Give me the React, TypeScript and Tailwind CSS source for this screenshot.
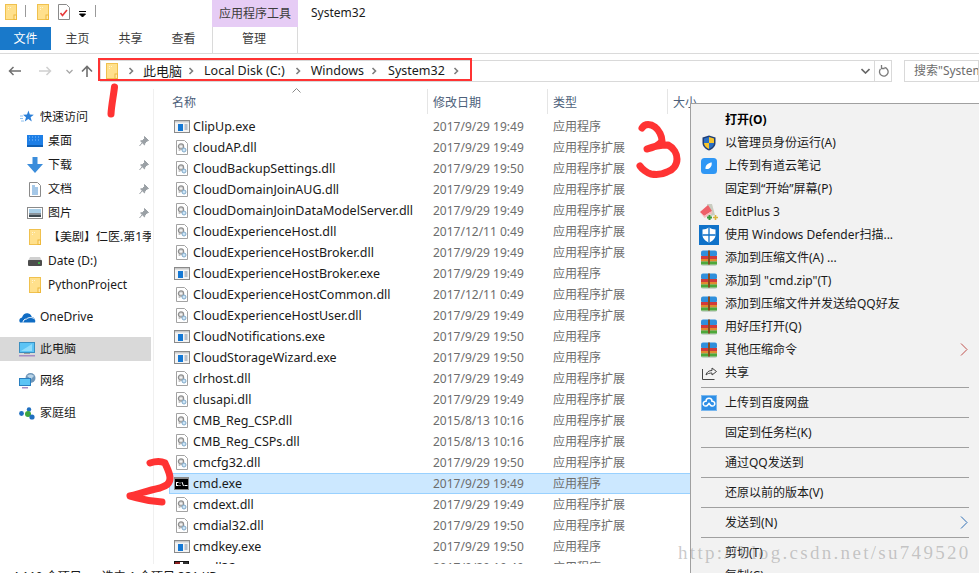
import React from "react";

const FONT = "font-['Noto_Sans','Noto_Sans_CJK_SC',sans-serif]";

function Folder({ w = 12, h = 16 }: { w?: number; h?: number }) {
  return (
    <svg width={w} height={h} viewBox="0 0 12 16" className="shrink-0">
      <rect x="0.5" y="0.5" width="11" height="15" fill="#ffe08c" stroke="#f0c14e" />
      <rect x="9" y="11" width="2.5" height="4.5" fill="#ffe9ad" stroke="#eeb83a" strokeWidth="1" />
      <rect x="3" y="3" width="1" height="1" fill="#fff4cf" />
      <rect x="5" y="3" width="1" height="1" fill="#fff4cf" />
      <rect x="3" y="5" width="1" height="1" fill="#fff4cf" />
    </svg>
  );
}

function ExeIcon() {
  return (
    <svg width="16" height="13" viewBox="0 0 16 13" className="shrink-0">
      <rect x="0.5" y="0.5" width="15" height="12" fill="#f4f4f4" stroke="#8a8a8a" />
      <rect x="1" y="1" width="14" height="1.5" fill="#c9c9c9" />
      <rect x="4" y="4" width="5" height="7" fill="#1578d4" />
      <path d="M10.5 5h3M10.5 7h3M10.5 9h3" stroke="#7a8aa0" strokeWidth="1" />
    </svg>
  );
}

function DllIcon() {
  return (
    <svg width="12" height="15" viewBox="0 0 12 15" className="shrink-0">
      <path d="M.5.5h8l3 3v11H.5z" fill="#fff" stroke="#a3a3a3" />
      <circle cx="5" cy="6.5" r="2.6" fill="#d8d8d8" stroke="#8f8f8f" strokeWidth="1.2" />
      <circle cx="5" cy="6.5" r="0.8" fill="#fff" />
      <circle cx="8" cy="10" r="2" fill="#cfe6f7" stroke="#80a9c9" strokeWidth="1" />
      <circle cx="3.5" cy="10" r="1.1" fill="#bcbcbc" />
    </svg>
  );
}

function CmdIcon() {
  return (
    <svg width="15" height="13" viewBox="0 0 15 13" className="shrink-0">
      <rect x="0" y="0" width="15" height="13" fill="#8a8a8a" />
      <rect x="1" y="2" width="13" height="10" fill="#000" />
      <path d="M2 5h2.500v1H3v2h1.500v1H2zM5.500 5.500h1v1h-1zM5.500 8h1v1h-1zM7.500 5h1l1.500 4H9zM10.500 8h3v1h-3z" fill="#fff" />
    </svg>
  );
}

function Cmdl32Icon() {
  return (
    <svg width="15" height="13" viewBox="0 0 15 13" className="shrink-0">
      <rect x="0.5" y="0.5" width="14" height="12" fill="#fff" stroke="#111" />
      <rect x="1" y="1" width="5" height="4" fill="#8a1f1f" />
      <rect x="9" y="1" width="5" height="4" fill="#333" />
    </svg>
  );
}

function Chevron({ className = "" }: { className?: string }) {
  return (
    <svg width="6" height="8" viewBox="0 0 6 8" className={`shrink-0 ${className}`}>
      <path d="M1.5 1l3 3-3 3" fill="none" stroke="#7c7c7c" strokeWidth="1.6" />
    </svg>
  );
}

function Pin() {
  return (
    <svg width="10" height="11" viewBox="0 0 10 11" className="shrink-0">
      <path d="M5.5.5l4 4-1.6.6-2 2-.4 1.8L1.6 5l1.9-.4 2-2.1zM3 7l-2.5 3" fill="#9aa0a5" stroke="#9aa0a5" strokeWidth="1" />
    </svg>
  );
}

function Shield() {
  return (
    <svg width="14" height="16" viewBox="0 0 14 16">
      <path d="M7 .5L13.5 2.5V8c0 3.5-3 6-6.5 7.5C3.5 14 .5 11.500.5 8V2.500z" fill="#1f3f78" />
      <path d="M7 2l5 1.500V8H7zM7 8v6C4.500 13 2 11 2 8z" fill="#f7c52c" />
      <path d="M7 2L2 3.500V8h5zM7 8v6c2.500-1 5-3 5-6z" fill="#2a6fc4" />
    </svg>
  );
}

function Youdao() {
  return (
    <svg width="16" height="16" viewBox="0 0 16 16">
      <rect width="16" height="16" rx="3.500" fill="#2f97f5" />
      <path d="M4.500 11c-.3-2.500.8-4.500 3-5.500l3-1.300c.8 2-.2 4.500-1.600 5.700-1.300 1-2.800 1.300-4.400 1.100z" fill="#fff" />
    </svg>
  );
}

function EditPlus() {
  return (
    <svg width="20" height="18" viewBox="0 0 20 18">
      <path d="M8 1l5 0 3 11-4 1z" fill="#c9ccc0" />
      <path d="M1 9L9 2l4 6-8 5z" fill="#ee6068" />
      <path d="M1 9l4 4 8-5 .5 2-8 5z" fill="#f6bcbe" />
      <path d="M8 14.500h5M10.500 12v5" stroke="#3c9a3c" strokeWidth="2" />
      <path d="M14 14.500h5M16.500 12v5" stroke="#d9b23c" strokeWidth="1.600" />
    </svg>
  );
}

function Defender() {
  return (
    <svg width="20" height="20" viewBox="0 0 20 20">
      <rect width="20" height="20" fill="#0f72c9" />
      <path d="M10 2.500c2 1.300 4 2 6.500 2V10c0 3.500-3 6-6.500 7.500C6.500 16 3.500 13.500 3.500 10V4.500c2.500 0 4.500-.7 6.500-2z" fill="#fff" />
      <path d="M10 2.500v15M3.500 10h13" stroke="#0f72c9" strokeWidth="1.300" />
    </svg>
  );
}

function Rar() {
  return (
    <svg width="16" height="16" viewBox="0 0 16 16">
      <rect x="0" y="1" width="16" height="15" rx="2" fill="#c8d4c8" />
      <rect x="0" y="0.500" width="16" height="6" rx="2" fill="#2f8fdc" />
      <rect x="0" y="6" width="16" height="3" fill="#d23a3a" />
      <rect x="0" y="9" width="16" height="2.500" fill="#e08a2e" />
      <rect x="0" y="11.500" width="16" height="3" fill="#4da83a" />
      <rect x="7" y="0.500" width="2" height="14" fill="#8a4b1e" />
    </svg>
  );
}

function Share() {
  return (
    <svg width="15" height="15" viewBox="0 0 15 15" fill="none" stroke="#444" strokeWidth="1">
      <path d="M.5 4v10.500h12" />
      <path d="M4 10c.5-3 3-4.500 6-4.500V3l4.500 3.500L10 10V8c-2.500 0-4.500.5-6 2z" />
    </svg>
  );
}

function Baidu() {
  return (
    <svg width="16" height="16" viewBox="0 0 16 16">
      <rect width="16" height="16" fill="#2f8fe6" />
      <rect x="0.500" y="0.500" width="15" height="15" fill="none" stroke="#79b7ee" />
      <path d="M3 10.500a2.500 2.500 0 0 1 2-4.300 3 3 0 0 1 6 0 2.500 2.500 0 0 1 2 4.300 2.500 2.500 0 0 1-3.700-.5L8 8.500 6.700 10A2.500 2.500 0 0 1 3 10.500z" fill="none" stroke="#fff" strokeWidth="1.500" />
    </svg>
  );
}

type Row = { name: string; date: string; kind: "exe" | "dll" | "cmd" | "cm32"; selected?: boolean };

const rows: Row[] = [
  { name: "ClipUp.exe", date: "2017/9/29 19:49", kind: "exe" },
  { name: "cloudAP.dll", date: "2017/9/29 19:49", kind: "dll" },
  { name: "CloudBackupSettings.dll", date: "2017/9/29 19:50", kind: "dll" },
  { name: "CloudDomainJoinAUG.dll", date: "2017/9/29 19:49", kind: "dll" },
  { name: "CloudDomainJoinDataModelServer.dll", date: "2017/9/29 19:49", kind: "dll" },
  { name: "CloudExperienceHost.dll", date: "2017/12/11 0:49", kind: "dll" },
  { name: "CloudExperienceHostBroker.dll", date: "2017/9/29 19:49", kind: "dll" },
  { name: "CloudExperienceHostBroker.exe", date: "2017/9/29 19:49", kind: "exe" },
  { name: "CloudExperienceHostCommon.dll", date: "2017/12/11 0:49", kind: "dll" },
  { name: "CloudExperienceHostUser.dll", date: "2017/9/29 19:49", kind: "dll" },
  { name: "CloudNotifications.exe", date: "2017/9/29 19:50", kind: "exe" },
  { name: "CloudStorageWizard.exe", date: "2017/9/29 19:50", kind: "exe" },
  { name: "clrhost.dll", date: "2017/9/29 19:49", kind: "dll" },
  { name: "clusapi.dll", date: "2017/9/29 19:49", kind: "dll" },
  { name: "CMB_Reg_CSP.dll", date: "2015/8/13 10:16", kind: "dll" },
  { name: "CMB_Reg_CSPs.dll", date: "2015/8/13 10:16", kind: "dll" },
  { name: "cmcfg32.dll", date: "2017/9/29 19:50", kind: "dll" },
  { name: "cmd.exe", date: "2017/9/29 19:49", kind: "cmd", selected: true },
  { name: "cmdext.dll", date: "2017/9/29 19:49", kind: "dll" },
  { name: "cmdial32.dll", date: "2017/9/29 19:50", kind: "dll" },
  { name: "cmdkey.exe", date: "2017/9/29 19:50", kind: "exe" },
  { name: "cmdl32.exe", date: "2017/9/29 19:49", kind: "cm32" },
];

function FileRow({ r }: { r: Row }) {
  const isApp = r.kind !== "dll";
  return (
    <div
      className={`flex h-[21px] shrink-0 items-center border ${
        r.selected ? "border-[#99d1ff] bg-[#cce8ff]" : "border-transparent"
      }`}
    >
      <div className="flex w-[23px] shrink-0 justify-center">
        {r.kind === "exe" && <ExeIcon />}
        {r.kind === "dll" && <DllIcon />}
        {r.kind === "cmd" && <CmdIcon />}
        {r.kind === "cm32" && <Cmdl32Icon />}
      </div>
      <span className="w-[240px] shrink-0 truncate pt-[2px] text-[12.5px] text-[#1a1a1a]">{r.name}</span>
      <span className="w-[120px] shrink-0 text-[#6d6d6d]">{r.date}</span>
      <span className="shrink-0 text-[#6d6d6d]">{isApp ? "应用程序" : "应用程序扩展"}</span>
    </div>
  );
}

function NavItem({
  icon,
  label,
  pin,
  indent,
  className = "",
}: {
  icon: React.ReactNode;
  label: string;
  pin?: boolean;
  indent?: boolean;
  className?: string;
}) {
  return (
    <div className={`mr-[2px] flex h-6 items-center whitespace-nowrap text-[#1a1a1a] ${className}`}>
      <div className={`flex shrink-0 justify-center ${indent ? "w-[48px] pl-[22px]" : "w-[40px] pl-[14px]"}`}>{icon}</div>
      <span className="flex-1 overflow-hidden">{label}</span>
      {pin && (
        <div className="mr-[2px]">
          <Pin />
        </div>
      )}
    </div>
  );
}

function Star() {
  return (
    <svg width="14" height="14" viewBox="0 0 14 14">
      <path d="M8.500.500l1.300 4 4 .3-3.200 2.500 1.200 4.200-3.500-2.400-3.500 2.400 1.200-4.200L3 4.800l4-.3z" fill="#2a7fd8" />
      <path d="M0 6h3M0 8.500h3M1 11h3" stroke="#8ec0ee" strokeWidth="1" />
    </svg>
  );
}

const Desktop = () => (
  <svg width="16" height="12" viewBox="0 0 16 12">
    <rect x="0" y="0" width="16" height="12" fill="#1e7fe6" />
    <rect x="0" y="10" width="16" height="2" fill="#0f5fb4" />
    <path d="M2 2h1M5 2h1M8 2h1M11 2h1M2 5h1M5 5h1M8 5h1M11 5h1" stroke="#7fc0ff" />
  </svg>
);
const Download = () => (
  <svg width="16" height="16" viewBox="0 0 16 16">
    <path d="M5.500 0h5v7H16l-8 9-8-9h5.500z" fill="#3b8ddb" />
  </svg>
);
const Doc = () => (
  <svg width="12" height="15" viewBox="0 0 12 15">
    <path d="M.5.500h8l3 3v11H.5z" fill="#fff" stroke="#8a8a8a" />
    <path d="M3 4h3M3 6h6M3 8h6M3 10h6M3 12h6" stroke="#4a90d0" />
  </svg>
);
const Pic = () => (
  <svg width="16" height="12" viewBox="0 0 16 12">
    <rect x="0.500" y="0.500" width="15" height="11" fill="#fff" stroke="#8a8a8a" />
    <rect x="2" y="2" width="12" height="4" fill="#a9cfe8" />
    <rect x="2" y="6" width="12" height="2" fill="#8a949c" />
    <rect x="2" y="8" width="12" height="2" fill="#3e4a52" />
  </svg>
);
const Drive = () => (
  <svg width="14" height="9" viewBox="0 0 14 9">
    <path d="M2 0h10l2 4H0z" fill="#d0d0d0" />
    <rect x="0" y="3" width="14" height="6" rx="1" fill="#4d4d4d" />
    <rect x="10" y="5" width="2" height="2" fill="#3fae49" />
  </svg>
);
const Cloud = () => (
  <svg width="17" height="11" viewBox="0 0 17 11">
    <path d="M1 10.500c-1.500-2-.5-4.500 2-5C4 2 7 .5 9.500 1.500c2 .5 3 2 3.300 3.500 2.500 0 4.200 3 3.200 5.500z" fill="#0f6cc4" />
    <path d="M4 10.500c0-2 1.500-3.500 3.500-3.500 2-2 6-2 8 0" fill="none" stroke="#fff" strokeWidth="1" />
  </svg>
);
const Pc = () => (
  <svg width="16" height="15" viewBox="0 0 16 15">
    <rect x="0.500" y="0.500" width="15" height="10" fill="#5cc4f5" stroke="#3a8fc0" />
    <path d="M2 9l11-7v7z" fill="#8fdcfb" />
    <rect x="5" y="11" width="6" height="1" fill="#9a9a9a" />
    <rect x="0" y="13" width="16" height="1.500" fill="#a78cc4" />
  </svg>
);
const Net = () => (
  <svg width="17" height="16" viewBox="0 0 17 16">
    <circle cx="11.500" cy="5" r="5" fill="#6f96b8" />
    <path d="M8 3c2-2 5-2 7 0l-3 3z" fill="#b9d4e8" />
    <rect x="0.500" y="5.500" width="11" height="7" fill="#5cc4f5" stroke="#2a7fc0" />
    <rect x="3" y="14" width="6" height="1.500" fill="#a78cc4" />
  </svg>
);
const Home = () => (
  <svg width="16" height="13" viewBox="0 0 16 13">
    <circle cx="2.500" cy="6.500" r="2.400" fill="#1f6fc0" />
    <circle cx="10" cy="2.500" r="2.200" fill="#1f6fc0" />
    <circle cx="9" cy="7" r="3" fill="#3fa63f" />
    <circle cx="13" cy="10" r="2.600" fill="#1f6fc0" />
  </svg>
);

function MenuItem({
  icon,
  label,
  bold,
  arrow,
}: {
  icon?: React.ReactNode;
  label: string;
  bold?: boolean;
  arrow?: string;
}) {
  return (
    <div className="flex h-[23px] shrink-0 items-center whitespace-nowrap">
      <div className="flex w-[34px] shrink-0 justify-center pl-[2px]">{icon}</div>
      <span className={bold ? "font-bold text-black" : "text-[#1a1a1a]"}>{label}</span>
      {arrow && (
        <svg width="8" height="13" viewBox="0 0 8 13" className="ml-auto mr-[11px]">
          <path d="M1 .5l6 6-6 6" fill="none" stroke={arrow} strokeWidth="1" />
        </svg>
      )}
    </div>
  );
}

const MenuSep = () => (
  <div className="flex h-[7px] shrink-0 items-center pl-[10px] pr-[10px]">
    <div className="h-px w-full bg-[#a0a0a0]" />
  </div>
);

function ContextMenu() {
  return (
    <div className="absolute left-[690px] top-[103px] flex h-[480px] w-[290px] flex-col border border-[#a0a0a0] bg-[#f2f2f2] pt-[4px] text-[12px]">
      <MenuItem bold label="打开(O)" />
      <MenuItem icon={<Shield />} label="以管理员身份运行(A)" />
      <MenuItem icon={<Youdao />} label="上传到有道云笔记" />
      <MenuItem label="固定到“开始”屏幕(P)" />
      <MenuItem icon={<EditPlus />} label="EditPlus 3" />
      <MenuItem icon={<Defender />} label="使用 Windows Defender扫描..." />
      <MenuItem icon={<Rar />} label="添加到压缩文件(A) ..." />
      <MenuItem icon={<Rar />} label="添加到 &quot;cmd.zip&quot;(T)" />
      <MenuItem icon={<Rar />} label="添加到压缩文件并发送给QQ好友" />
      <MenuItem icon={<Rar />} label="用好压打开(Q)" />
      <MenuItem icon={<Rar />} label="其他压缩命令" arrow="#c0504d" />
      <MenuItem icon={<Share />} label="共享" />
      <MenuSep />
      <MenuItem icon={<Baidu />} label="上传到百度网盘" />
      <MenuSep />
      <MenuItem label="固定到任务栏(K)" />
      <MenuSep />
      <MenuItem label="通过QQ发送到" />
      <MenuSep />
      <MenuItem label="还原以前的版本(V)" />
      <MenuSep />
      <MenuItem label="发送到(N)" arrow="#2f6fb5" />
      <MenuSep />
      <MenuItem label="剪切(T)" />
      <MenuItem label="复制(C)" />
    </div>
  );
}

function Scribbles() {
  return (
    <svg
      width="979"
      height="573"
      viewBox="0 0 979 573"
      className="pointer-events-none absolute left-0 top-0"
      fill="none"
      stroke="#ff3333"
      strokeLinecap="round"
      strokeLinejoin="round"
    >
      <path d="M114.500 87c-1 9-3 18-3.500 27" strokeWidth="7" />
      <path d="M150 463c6-2 11-2 15 0 2 5 5 10 5 15 0 6-4 8-10 10-9 2-19 5-30 8 9 2 15 5 32 6" strokeWidth="7" />
      <path d="M642 128c3-5 9-4 13-1 4 3 7 9 7 14-3 4-9 7-15 8 7-3 14-4 21-4 6 3 9 9 9 14 0 6-4 11-10 13-6 3-11 3-16 2-4-1-9-5-11-8" strokeWidth="7" />
    </svg>
  );
}

export default function App() {
  return (
    <div className={`relative flex h-[573px] w-[979px] flex-col overflow-hidden bg-white text-[12px] leading-none ${FONT}`}>
      {/* title row */}
      <div className="flex h-[27px] shrink-0 items-start">
        <div className="flex h-[27px] w-[212px] items-start pl-[5px] pt-[4px]">
          <Folder />
          <div className="ml-[8px] mt-[1px] h-[12px] w-px bg-[#9a9a9a]" />
          <div className="ml-[11px]">
            <Folder />
          </div>
          <svg width="12" height="16" viewBox="0 0 12 16" className="ml-[9px]">
            <path d="M.5.500h8l3 3v12H.5z" fill="#fff" stroke="#8a8a8a" />
            <path d="M2.500 9l2 2.500L9 6" fill="none" stroke="#e63a3a" strokeWidth="1.600" />
          </svg>
          <svg width="7" height="6" viewBox="0 0 7 6" className="ml-[9px] mt-[7px]">
            <path d="M0 .5h7M.5 3h6L3.500 6z" stroke="#000" strokeWidth="1" fill="#000" />
          </svg>
          <div className="ml-[9px] mt-[1px] h-[12px] w-px bg-[#9a9a9a]" />
        </div>
        <div className="flex h-[27px] w-[86px] items-center justify-center bg-[#e6ccf5] text-[#3c3c3c]">应用程序工具</div>
        <div className="ml-[13px] flex h-[25px] items-center text-[#1a1a1a]">System32</div>
      </div>
      {/* ribbon tabs */}
      <div className="flex h-[23px] shrink-0 items-stretch text-[#3c3c3c]">
        <div className="flex w-[51px] items-center justify-center bg-[#1979ca] text-white">文件</div>
        <div className="flex w-[53px] items-center justify-center">主页</div>
        <div className="flex w-[53px] items-center justify-center">共享</div>
        <div className="flex w-[53px] items-center justify-center">查看</div>
        <div className="-mb-[3px] ml-[2px] flex w-[86px] items-center justify-center border-x border-[#dadada] bg-white pb-[3px] pr-[2px]">管理</div>
      </div>
      <div className="mt-[3px] h-px shrink-0 bg-[#dadada]" />
      {/* address row */}
      <div className="flex h-[35px] shrink-0 items-start pt-[6px]">
        <div className="flex h-[22px] w-[100px] shrink-0 items-center pl-[8px]">
          <svg width="13" height="10" viewBox="0 0 13 10" fill="none" stroke="#6f6f6f" strokeWidth="1.500">
            <path d="M13 5H1.500M5.500 1L1.500 5l4 4" />
          </svg>
          <svg width="13" height="10" viewBox="0 0 13 10" fill="none" stroke="#cfcfcf" strokeWidth="1.500" className="ml-[18px]">
            <path d="M0 5h11.500M7.500 1l4 4-4 4" />
          </svg>
          <svg width="7" height="5" viewBox="0 0 7 5" fill="none" stroke="#a8a8a8" strokeWidth="1.300" className="ml-[14px]">
            <path d="M.5 1l3 3 3-3" />
          </svg>
          <svg width="12" height="12" viewBox="0 0 12 12" fill="none" stroke="#6f6f6f" strokeWidth="1.600" className="ml-[8px]">
            <path d="M6 12V1.500M1 6.500l5-5 5 5" />
          </svg>
        </div>
        <div className="flex h-[22px] w-[792px] shrink-0 items-center border border-[#d9d9d9] text-[12.5px] text-[#1a1a1a]">
          <div className="ml-[5px]">
            <Folder />
          </div>
          <Chevron className="ml-[10px]" />
          <span className="ml-[9px] text-[13px]">此电脑</span>
          <Chevron className="ml-[6px]" />
          <span className="ml-[10px]">Local Disk (C:)</span>
          <Chevron className="ml-[10px]" />
          <span className="ml-[10px]">Windows</span>
          <Chevron className="ml-[7px]" />
          <span className="ml-[11px]">System32</span>
          <Chevron className="ml-[8px]" />
          <svg width="9" height="6" viewBox="0 0 9 6" fill="none" stroke="#666" strokeWidth="1.600" className="ml-auto mr-[4px]">
            <path d="M.5 1l4 4 4-4" />
          </svg>
          <div className="flex h-full w-[17px] items-center justify-center border-l border-[#d9d9d9]">
            <svg width="11" height="12" viewBox="0 0 11 12" fill="none" stroke="#7a7a7a" strokeWidth="1.300">
              <path d="M6.500 2.500a4.300 4.300 0 1 1-4 1.500M3.500 0v3.500h3" />
            </svg>
          </div>
        </div>
        <div className="ml-[12px] flex h-[22px] flex-1 items-center overflow-hidden whitespace-nowrap border border-[#d9d9d9] pl-[9px] text-[#6d6d6d]">
          搜索"System32"
        </div>
      </div>
      {/* body */}
      <div className="flex min-h-0 flex-1">
        <div className="w-[154px] shrink-0 overflow-hidden border-r border-[#f0f0f0] pt-[16px]">
          <NavItem icon={<Star />} label="快速访问" />
          <NavItem indent icon={<Desktop />} label="桌面" pin />
          <NavItem indent icon={<Download />} label="下载" pin />
          <NavItem indent icon={<Doc />} label="文档" pin />
          <NavItem indent icon={<Pic />} label="图片" pin />
          <NavItem indent icon={<Folder />} label="【美剧】仁医.第1季" />
          <NavItem indent icon={<Drive />} label="Date (D:)" />
          <NavItem indent icon={<Folder />} label="PythonProject" />
          <NavItem className="mt-[8px]" icon={<Cloud />} label="OneDrive" />
          <NavItem className="mt-[8px] bg-[#d9d9d9]" icon={<Pc />} label="此电脑" />
          <NavItem className="mt-[8px]" icon={<Net />} label="网络" />
          <NavItem className="mt-[8px]" icon={<Home />} label="家庭组" />
        </div>
        <div className="flex min-w-0 flex-1 flex-col pl-[15px]">
          <div className="relative flex h-[27px] shrink-0 items-center text-[#4c607a]">
            <span className="w-[258px] pl-[3px]">名称</span>
            <span className="w-[120px] pl-[6px]">修改日期</span>
            <span className="w-[120px] pl-[6px]">类型</span>
            <span className="pl-[6px]">大小</span>
            <div className="absolute left-[258px] top-[0px] h-[25px] w-px bg-[#e5e5e5]" />
            <div className="absolute left-[378px] top-[0px] h-[25px] w-px bg-[#e5e5e5]" />
            <div className="absolute left-[498px] top-[0px] h-[25px] w-px bg-[#e5e5e5]" />
            <svg width="9" height="5" viewBox="0 0 9 5" fill="none" stroke="#8a8a8a" className="absolute left-[123px] top-[-1px]">
              <path d="M.5 4.500l4-4 4 4" />
            </svg>
          </div>
          <div className="flex min-h-0 flex-col overflow-hidden">
            {rows.map((r) => (
              <FileRow key={r.name} r={r} />
            ))}
          </div>
        </div>
      </div>
      {/* status bar */}
      <div className="flex h-[9px] shrink-0 gap-[20px] overflow-hidden bg-white pl-[12px] pt-[7px] text-[#1a1a1a]">
        <span>4,110 个项目</span>
        <span>选中 1 个项目 331 KB</span>
      </div>
      <ContextMenu />
      <div className="absolute left-[98px] top-[58px] h-[23px] w-[374px] border-2 border-[#ff3333]" />
      <Scribbles />
      <div className="pointer-events-none absolute left-[678px] top-[543px] whitespace-nowrap font-['Liberation_Serif',serif] text-[19px] leading-none tracking-[2.300px] text-[#8a8a8a]/45">
        http://blog.csdn.net/su749520
      </div>
    </div>
  );
}
